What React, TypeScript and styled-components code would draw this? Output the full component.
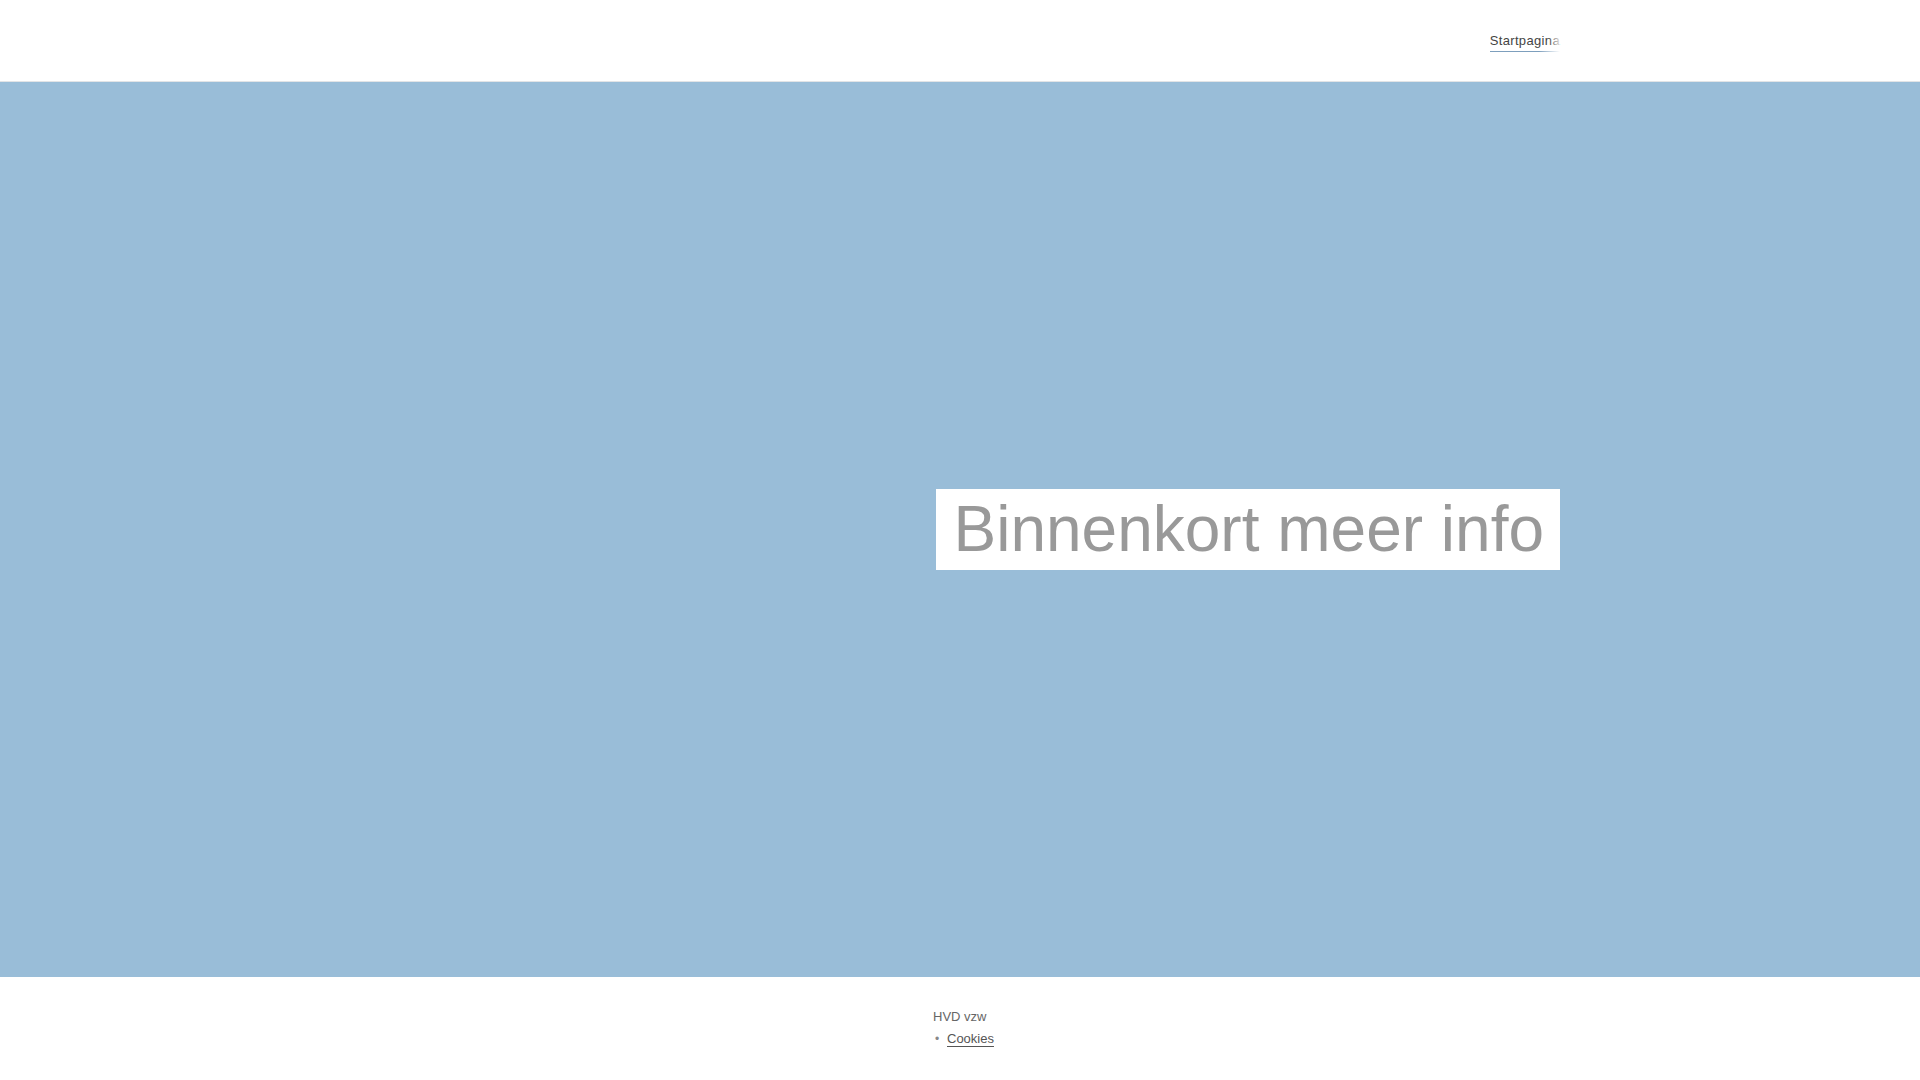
import React from 'react';
import styled, { createGlobalStyle } from 'styled-components';

const GlobalStyle = createGlobalStyle`
  html, body {
    margin: 0;
    padding: 0;
    background: #fff;
    font-family: "Liberation Sans", Arial, sans-serif;
  }
`;

const Header = styled.header`
  height: 81px;
  border-bottom: 1px solid #e2e4e6;
  background: #fff;
`;

const Container = styled.div`
  width: 1200px;
  margin: 0 auto;
  height: 100%;
`;

const Nav = styled.nav`
  display: flex;
  justify-content: flex-end;
  align-items: center;
  height: 100%;
`;

const NavLink = styled.a<{ $active?: boolean }>`
  position: relative;
  font-size: 13px;
  letter-spacing: 0.35px;
  color: #444;
  text-decoration: none;
  line-height: 15px;

  &::before {
    content: '';
    position: absolute;
    left: 0;
    right: 0;
    bottom: -4px;
    height: 1px;
    background: ${(p) => (p.$active ? 'linear-gradient(to right, #7d9fbd 70%, rgba(125,159,189,0))' : 'transparent')};
  }

  &::after {
    content: '';
    position: absolute;
    top: 0;
    right: 0;
    width: 12px;
    height: 100%;
    background: linear-gradient(to right, rgba(255,255,255,0), rgba(255,255,255,0.85));
  }
`;

const Hero = styled.section`
  height: 895px;
  background: #99bdd8;
`;

const HeroInner = styled(Container)`
  display: flex;
  justify-content: flex-end;
  align-items: center;
`;

const Title = styled.h1`
  margin: 0;
  padding: 0 16px 0 17px;
  background: #fff;
  color: #999;
  font-weight: 400;
  font-size: 64px;
  line-height: 81px;
`;

const Footer = styled.footer`
  height: 103px;
  background: #fff;
`;

const FooterInner = styled(Container)`
  display: grid;
  grid-template-columns: 573px 1fr;
  padding-top: 29px;
  box-sizing: border-box;
`;

const FooterCol = styled.div`
  grid-column: 2;
  font-size: 13px;
  line-height: 22px;
  color: #666;
`;

const LinkList = styled.ul`
  list-style: none;
  margin: 0;
  padding: 0;
`;

const LinkItem = styled.li`
  position: relative;
  padding-left: 14px;

  &::before {
    content: '•';
    position: absolute;
    left: 2px;
    top: 0;
    color: #888;
    font-size: 12px;
  }
`;

const FooterLink = styled.a`
  color: #555;
  text-decoration: underline;
  text-underline-offset: 3px;
`;

export default function App() {
  return (
    <>
      <GlobalStyle />
      <Header>
        <Container>
          <Nav>
            <NavLink href="#" $active>Startpagina</NavLink>
          </Nav>
        </Container>
      </Header>
      <Hero>
        <HeroInner>
          <Title>Binnenkort meer info</Title>
        </HeroInner>
      </Hero>
      <Footer>
        <FooterInner>
          <FooterCol>
            <div>HVD vzw</div>
            <LinkList>
              <LinkItem>
                <FooterLink href="#">Cookies</FooterLink>
              </LinkItem>
            </LinkList>
          </FooterCol>
        </FooterInner>
      </Footer>
    </>
  );
}
